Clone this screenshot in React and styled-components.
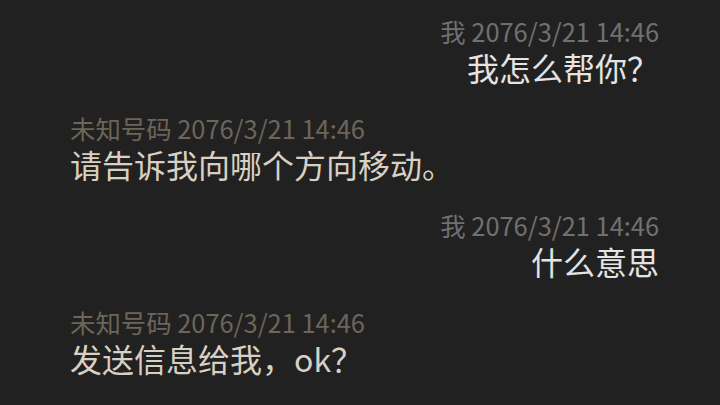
import React from 'react';
import styled, { createGlobalStyle } from 'styled-components';

const GlobalStyle = createGlobalStyle`
  html, body {
    margin: 0;
    padding: 0;
    background: #222121;
  }
  body {
    font-family: "Noto Sans CJK SC", "Noto Sans", sans-serif;
  }
`;

const Screen = styled.div`
  width: 720px;
  height: 405px;
  overflow: hidden;
  background: #222121;
  padding: 14px 61px 0 70px;
  box-sizing: border-box;
  display: flex;
  flex-direction: column;
  gap: 25px;
`;

const Message = styled.div`
  display: flex;
  flex-direction: column;
  align-items: ${({ $mine }) => ($mine ? 'flex-end' : 'flex-start')};
`;

const Header = styled.div`
  font-size: 25.4px;
  line-height: 34px;
  color: ${({ $mine }) => ($mine ? '#707070' : '#6c6559')};
  white-space: nowrap;
`;

const Body = styled.div`
  font-size: 32px;
  line-height: 38px;
  color: ${({ $mine }) => ($mine ? '#e4e4e4' : '#d8d0c2')};
  white-space: nowrap;
`;

const messages = [
  { mine: true, from: '我', time: '2076/3/21 14:46', text: '我怎么帮你？' },
  { mine: false, from: '未知号码', time: '2076/3/21 14:46', text: '请告诉我向哪个方向移动。' },
  { mine: true, from: '我', time: '2076/3/21 14:46', text: '什么意思' },
  { mine: false, from: '未知号码', time: '2076/3/21 14:46', text: '发送信息给我，ok？' },
];

export default function App() {
  return (
    <>
      <GlobalStyle />
      <Screen>
        {messages.map((m, i) => (
          <Message key={i} $mine={m.mine}>
            <Header $mine={m.mine}>{m.from} {m.time}</Header>
            <Body $mine={m.mine}>{m.text}</Body>
          </Message>
        ))}
      </Screen>
    </>
  );
}
